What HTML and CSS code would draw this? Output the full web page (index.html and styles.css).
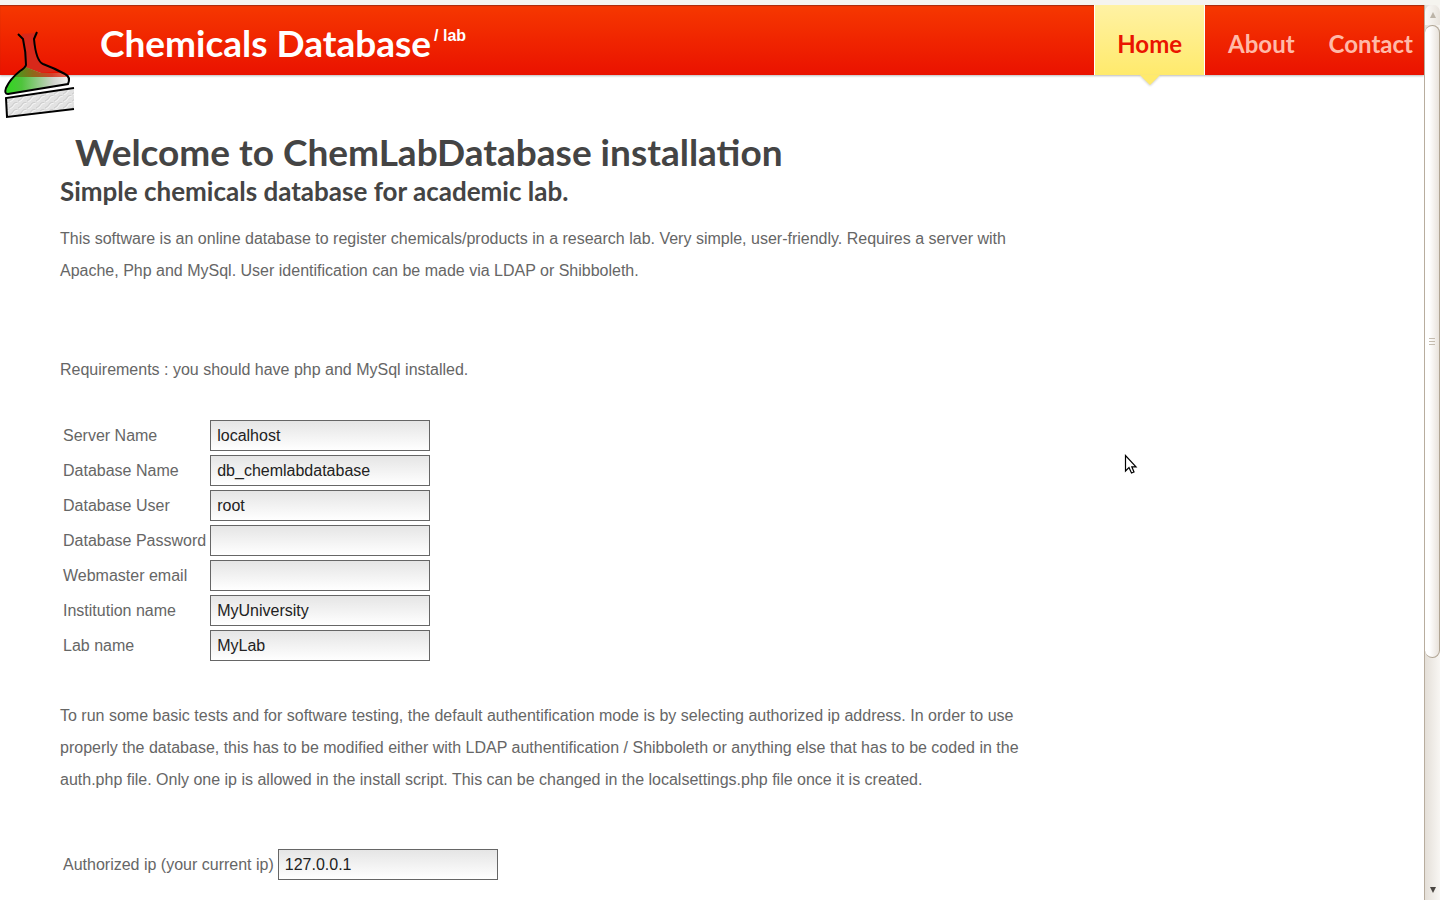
FILE: index.html
```html
<!DOCTYPE html>
<html lang="en">
<head>
    <meta charset="UTF-8">
    <meta name="viewport" content="width=device-width, initial-scale=1.0">
    <title>ChemLabDatabase installation</title>
    <link rel="stylesheet" href="styles.css">
</head>
<body>
    <div class="window">
        <div class="page">
            <header class="header">
                <svg class="logo" width="76" height="92" viewBox="0 0 76 92" aria-hidden="true">
                    <defs>
                        <linearGradient id="liquid" x1="0" y1="0" x2="1" y2="0">
                            <stop offset="0" stop-color="#2fd81f"/>
                            <stop offset="0.25" stop-color="#4fc43c"/>
                            <stop offset="0.75" stop-color="#cfd2cb"/>
                            <stop offset="1" stop-color="#f4f4f4"/>
                        </linearGradient>
                        <linearGradient id="shade" x1="0" y1="0" x2="1" y2="0">
                            <stop offset="0" stop-color="#3fa01c"/>
                            <stop offset="0.35" stop-color="#8d6a18"/>
                            <stop offset="0.7" stop-color="#d2402c"/>
                            <stop offset="1" stop-color="#ee6a58"/>
                        </linearGradient>
                        <pattern id="hatch" width="9" height="7" patternUnits="userSpaceOnUse">
                            <rect width="9" height="7" fill="#e2e2e2"/>
                            <path d="M0 6 L3 4 L5 1 L9 0" fill="none" stroke="#cdcdcd" stroke-width="1"/>
                            <path d="M1 7 L4 5 L6 2 L9 1" fill="none" stroke="#f4f4f4" stroke-width="1"/>
                        </pattern>
                    </defs>
                    <path d="M22 9 L35 8 Q34 25 40 38 L60 46 L41 48 L25 44 Z" fill="#d8281a"/>
                    <path d="M25 42 Q12 52 7 61 Q5 66 7 69 L68 59 Q71 51 64 48 L41 48 Z" fill="url(#liquid)"/>
                    <path d="M25 42 Q18 47 14 52 L68 52 L64 48 L41 48 Z" fill="url(#shade)"/>
                    <path d="M18 9 L23 14 Q26 27 26 40 Q25 43 20 46 Q10 54 6 63 Q4 69 8 69 L68 59 Q71 52 65 49 Q54 43 43 39 Q36 36 34 14 L37 7" fill="none" stroke="#000" stroke-width="2"/>
                    <path d="M6 73 L74 64 V84 L7 93 Z" fill="url(#hatch)"/>
                    <path d="M74 63 L6 73 L7 92 L74 84" fill="none" stroke="#000" stroke-width="2"/>
                </svg>
                <div class="brand">Chemicals Database<sup class="brand-tag">/ lab</sup></div>
                <nav class="menu">
                    <a class="menu-item active" href="#">Home</a>
                    <a class="menu-item" href="#about">About</a>
                    <a class="menu-item" href="#contact">Contact</a>
                </nav>
            </header>

            <main class="content">
                <h1>Welcome to ChemLabDatabase installation</h1>
                <h2>Simple chemicals database for academic lab.</h2>
                <p class="intro">This software is an online database to register chemicals/products in a research lab. Very simple, user-friendly. Requires a server with Apache, Php and MySql. User identification can be made via LDAP or Shibboleth.</p>
                <p class="requirements">Requirements : you should have php and MySql installed.</p>

                <form>
                    <table class="settings">
                        <tr>
                            <td><label for="server">Server Name</label></td>
                            <td><input type="text" id="server" value="localhost"></td>
                        </tr>
                        <tr>
                            <td><label for="dbname">Database Name</label></td>
                            <td><input type="text" id="dbname" value="db_chemlabdatabase"></td>
                        </tr>
                        <tr>
                            <td><label for="dbuser">Database User</label></td>
                            <td><input type="text" id="dbuser" value="root"></td>
                        </tr>
                        <tr>
                            <td><label for="dbpass">Database Password</label></td>
                            <td><input type="password" id="dbpass"></td>
                        </tr>
                        <tr>
                            <td><label for="email">Webmaster email</label></td>
                            <td><input type="text" id="email"></td>
                        </tr>
                        <tr>
                            <td><label for="institution">Institution name</label></td>
                            <td><input type="text" id="institution" value="MyUniversity"></td>
                        </tr>
                        <tr>
                            <td><label for="lab">Lab name</label></td>
                            <td><input type="text" id="lab" value="MyLab"></td>
                        </tr>
                    </table>

                    <p class="auth-note">To run some basic tests and for software testing, the default authentification mode is by selecting authorized ip address. In order to use properly the database, this has to be modified either with LDAP authentification / Shibboleth or anything else that has to be coded in the auth.php file. Only one ip is allowed in the install script. This can be changed in the localsettings.php file once it is created.</p>

                    <table class="settings">
                        <tr>
                            <td><label for="ip">Authorized ip (your current ip)</label></td>
                            <td><input type="text" id="ip" value="127.0.0.1"></td>
                        </tr>
                    </table>
                </form>
            </main>
        </div>

        <div class="scrollbar" aria-hidden="true">
            <div class="scroll-arrow up">
                <svg width="6" height="6" viewBox="0 0 6 6"><path d="M3 0 L6 6 H0 Z" fill="#bcb4a8"/></svg>
            </div>
            <div class="scroll-track">
                <div class="scroll-thumb"><i></i><i></i><i></i></div>
            </div>
            <div class="scroll-arrow down">
                <svg width="6" height="6" viewBox="0 0 6 6"><path d="M0 0 H6 L3 6 Z" fill="#4a4642"/></svg>
            </div>
        </div>
    </div>

    <svg class="pointer" width="14" height="22" viewBox="0 0 14 22" aria-hidden="true">
        <path d="M1.5 1.5 V17 L5 13.5 L7.5 19 L10 18 L7.8 12.8 H12 Z" fill="#fff" stroke="#000" stroke-width="1.2"/>
    </svg>
</body>
</html>
```
FILE: styles.css
```css
* {
    box-sizing: border-box;
}

body {
    margin: 0;
    background: #f5f4ef;
    color: #666;
    font-family: "Liberation Sans", Arial, sans-serif;
    font-size: 16px;
    overflow: hidden;
}

.window {
    display: flex;
    height: 100vh;
    padding-top: 5px;
}

.page {
    flex: 1;
    min-width: 0;
    background: #fff;
    overflow: hidden;
}

/* header */
.header {
    position: relative;
    display: flex;
    height: 70px;
    padding-left: 100px;
    background: linear-gradient(#f63800, #ea1200);
    box-shadow: inset 0 1px 1px #a82c0c, 0 1px 2px #bbb;
}

.logo {
    position: absolute;
    left: 0;
    top: 20px;
    overflow: visible;
}

.brand {
    flex: 1;
    color: #fff;
    font-family: "Trebuchet MS", Lato, sans-serif;
    font-size: 37px;
    font-weight: bold;
    line-height: 76px;
    white-space: nowrap;
}

.brand-tag {
    margin-left: 3px;
    font-family: "Liberation Sans", Arial, sans-serif;
    font-size: 16px;
    line-height: 1;
    vertical-align: 16px;
}

.menu {
    display: flex;
    gap: 12px;
}

.menu-item {
    padding: 0 11px;
    color: #ffb9a8;
    font-family: "Trebuchet MS", Lato, sans-serif;
    font-size: 24px;
    font-weight: bold;
    line-height: 78px;
    text-decoration: none;
}

.menu-item.active {
    position: relative;
    padding: 0 22px;
    border: 1px solid #fff;
    border-width: 0 1px;
    background: linear-gradient(#fff2a4, #ffea6c);
    color: #ea1400;
}

.menu-item.active::after {
    content: "";
    position: absolute;
    top: 100%;
    left: 50%;
    margin-left: -10px;
    border: 10px solid transparent;
    border-top-color: #ffea6c;
    border-bottom: 0;
    filter: drop-shadow(0 1px 1px #ccc);
}

/* content */
.content {
    max-width: 1080px;
    padding: 53px 60px 0;
}

h1, h2 {
    margin: 0;
    color: #444;
    font-family: "Trebuchet MS", Lato, sans-serif;
}

h1 {
    padding-left: 15px;
    font-size: 37px;
    line-height: 48px;
}

h2 {
    font-size: 26px;
    line-height: 30px;
}

p {
    margin: 0;
    line-height: 32px;
}

.intro {
    margin-top: 17px;
}

.requirements {
    margin: 67px 0 31px;
}

.auth-note {
    margin: 36px 0 50px;
}

.settings input {
    display: block;
    width: 220px;
    height: 31px;
    padding: 0 6px;
    border: 1px solid #666;
    background: linear-gradient(#e5e5e5, #fff);
    color: #222;
    font: inherit;
}

/* scrollbar */
.scrollbar {
    display: flex;
    flex-direction: column;
    width: 16px;
    background: linear-gradient(to right, #e4dfd8, #f8f6f3);
    border-left: 1px solid #b8ad9e;
}

.scroll-arrow {
    display: flex;
    align-items: center;
    justify-content: center;
    height: 20px;
    background: linear-gradient(to right, #fbfaf8, #e8e3dc);
}

.scroll-arrow.up {
    border-radius: 7px 7px 0 0;
}

.scroll-arrow.down {
    background: none;
}

.scroll-track {
    flex: 1;
}

.scroll-thumb {
    display: flex;
    flex-direction: column;
    align-items: center;
    justify-content: center;
    gap: 2px;
    height: 74%;
    border: 1px solid #b0a594;
    border-left: 0;
    border-radius: 8px;
    background: linear-gradient(to right, #fff 30%, #e8e2db);
}

.scroll-thumb i {
    width: 6px;
    height: 1px;
    background: #c4bbae;
}

.pointer {
    position: absolute;
    left: 1124px;
    top: 454px;
}
```
